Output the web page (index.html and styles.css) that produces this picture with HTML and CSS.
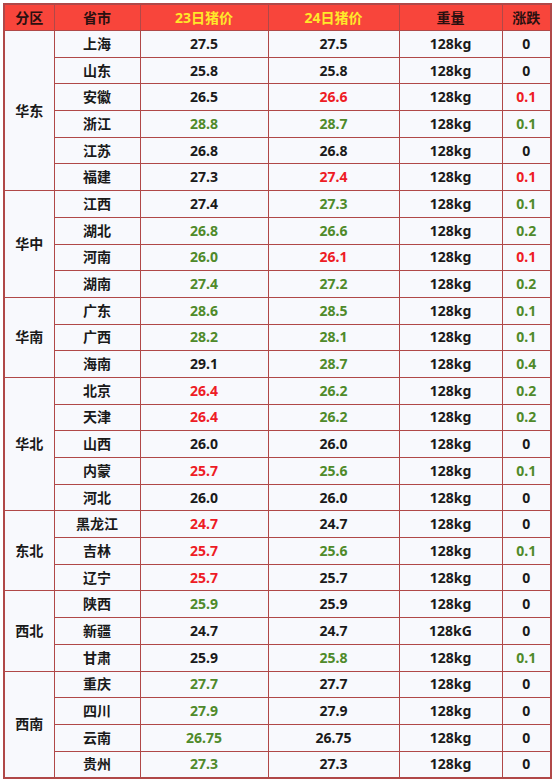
FILE: index.html
```html
<!DOCTYPE html>
<html lang="zh">
<head>
<meta charset="utf-8">
<link rel="stylesheet" href="styles.css">
</head>
<body>
<table class="price">
<colgroup>
<col class="c1"><col class="c2"><col class="c3"><col class="c4"><col class="c5"><col class="c6">
</colgroup>
<thead>
<tr><th>分区</th><th>省市</th><th class="y">23日猪价</th><th class="y">24日猪价</th><th>重量</th><th>涨跌</th></tr>
</thead>
<tbody>
<tr><td class="region" rowspan="6">华东</td><td>上海</td><td>27.5</td><td>27.5</td><td>128kg</td><td>0</td></tr>
<tr><td>山东</td><td>25.8</td><td>25.8</td><td>128kg</td><td>0</td></tr>
<tr><td>安徽</td><td>26.5</td><td class="r">26.6</td><td>128kg</td><td class="r">0.1</td></tr>
<tr><td>浙江</td><td class="g">28.8</td><td class="g">28.7</td><td>128kg</td><td class="g">0.1</td></tr>
<tr><td>江苏</td><td>26.8</td><td>26.8</td><td>128kg</td><td>0</td></tr>
<tr><td>福建</td><td>27.3</td><td class="r">27.4</td><td>128kg</td><td class="r">0.1</td></tr>
<tr><td class="region" rowspan="4">华中</td><td>江西</td><td>27.4</td><td class="g">27.3</td><td>128kg</td><td class="g">0.1</td></tr>
<tr><td>湖北</td><td class="g">26.8</td><td class="g">26.6</td><td>128kg</td><td class="g">0.2</td></tr>
<tr><td>河南</td><td class="g">26.0</td><td class="r">26.1</td><td>128kg</td><td class="r">0.1</td></tr>
<tr><td>湖南</td><td class="g">27.4</td><td class="g">27.2</td><td>128kg</td><td class="g">0.2</td></tr>
<tr><td class="region" rowspan="3">华南</td><td>广东</td><td class="g">28.6</td><td class="g">28.5</td><td>128kg</td><td class="g">0.1</td></tr>
<tr><td>广西</td><td class="g">28.2</td><td class="g">28.1</td><td>128kg</td><td class="g">0.1</td></tr>
<tr><td>海南</td><td>29.1</td><td class="g">28.7</td><td>128kg</td><td class="g">0.4</td></tr>
<tr><td class="region" rowspan="5">华北</td><td>北京</td><td class="r">26.4</td><td class="g">26.2</td><td>128kg</td><td class="g">0.2</td></tr>
<tr><td>天津</td><td class="r">26.4</td><td class="g">26.2</td><td>128kg</td><td class="g">0.2</td></tr>
<tr><td>山西</td><td>26.0</td><td>26.0</td><td>128kg</td><td>0</td></tr>
<tr><td>内蒙</td><td class="r">25.7</td><td class="g">25.6</td><td>128kg</td><td class="g">0.1</td></tr>
<tr><td>河北</td><td>26.0</td><td>26.0</td><td>128kg</td><td>0</td></tr>
<tr><td class="region" rowspan="3">东北</td><td>黑龙江</td><td class="r">24.7</td><td>24.7</td><td>128kg</td><td>0</td></tr>
<tr><td>吉林</td><td class="r">25.7</td><td class="g">25.6</td><td>128kg</td><td class="g">0.1</td></tr>
<tr><td>辽宁</td><td class="r">25.7</td><td>25.7</td><td>128kg</td><td>0</td></tr>
<tr><td class="region" rowspan="3">西北</td><td>陕西</td><td class="g">25.9</td><td>25.9</td><td>128kg</td><td>0</td></tr>
<tr><td>新疆</td><td>24.7</td><td>24.7</td><td>128kG</td><td>0</td></tr>
<tr><td>甘肃</td><td>25.9</td><td class="g">25.8</td><td>128kg</td><td class="g">0.1</td></tr>
<tr><td class="region" rowspan="4">西南</td><td>重庆</td><td class="g">27.7</td><td>27.7</td><td>128kg</td><td>0</td></tr>
<tr><td>四川</td><td class="g">27.9</td><td>27.9</td><td>128kg</td><td>0</td></tr>
<tr><td>云南</td><td class="g">26.75</td><td>26.75</td><td>128kg</td><td>0</td></tr>
<tr><td>贵州</td><td class="g">27.3</td><td>27.3</td><td>128kg</td><td>0</td></tr>
</tbody>
</table>
</body>
</html>
```
FILE: styles.css
```css
html, body {
  margin: 0;
  padding: 0;
  background: #ffffff;
}
body {
  padding: 3px 0 0 3px;
  font-family: "Noto Sans", "Noto Sans CJK SC", sans-serif;
}
.price {
  border-collapse: collapse;
  table-layout: fixed;
  width: 547px;
  border: 2px solid #b04848;
  background: #f8f9fd;
}
.c1 { width: 50px; }
.c2 { width: 86px; }
.c3 { width: 128px; }
.c4 { width: 131px; }
.c5 { width: 103px; }
.c6 { width: 49px; }
.price th, .price td {
  border: 1px solid #b04848;
  padding: 0;
  text-align: center;
  font-size: 14px;
  font-weight: 700;
  color: #1a1a1a;
  line-height: 1;
}
.price th {
  height: 25px;
  background: #f8453b;
  color: #2a1010;
}
.price th.y {
  color: #ffe82a;
}
.price td {
  height: 25.7px;
}
.price td.region {
  background: #f8f9fd;
}
.price td.g { color: #4f8a2a; }
.price td.r { color: #ee1c25; }
```
